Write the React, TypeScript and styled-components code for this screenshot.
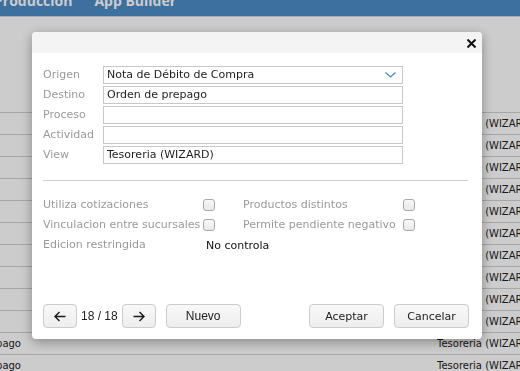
import React from 'react'
import styled, { createGlobalStyle } from 'styled-components'

const GlobalStyle = createGlobalStyle`
    html, body {
        margin: 0;
        padding: 0;
        overflow: hidden;
        background: #ffffff;
        font-family: "DejaVu Sans", Verdana, sans-serif;
    }
`

const Page = styled.div`
    width: 520px;
    height: 371px;
    overflow: hidden;
    background: #ffffff;
`

// page is scrolled a bit, so the bar sits partly above the window
const TopBar = styled.div`
    height: 30px;
    margin-top: -14px;
    display: flex;
    align-items: center;
    gap: 22px;
    margin-left: -6px;
    background: #4d8bc7;
    border-bottom: 1px solid #d3d9e0;
`

const MenuItem = styled.span`
    font-family: "Open Sans", "Liberation Sans", sans-serif;
    font-weight: 700;
    font-size: 14px;
    color: #ffffff;
    line-height: 30px;
`

const PageHead = styled.div`
    height: 95px;
`

const Row = styled.div`
    display: grid;
    grid-template-columns: 21px 416px 1fr;
    height: 21px;
    border-top: 1px solid #d0d0d0;
    align-items: center;
    font-size: 10px;
    color: #222;
`

const LeftCell = styled.div`
    display: flex;
    justify-content: flex-end;
    overflow: hidden;
    white-space: nowrap;
`

const RightCell = styled.div`
    white-space: nowrap;
    overflow: hidden;
`

const Backdrop = styled.div`
    position: fixed;
    inset: 0;
    background: rgba(0, 0, 0, 0.2);
`

const Dialog = styled.div`
    position: fixed;
    top: 32px;
    left: 32px;
    width: 450px;
    height: 307px;
    background: #ffffff;
    border-radius: 4px;
    overflow: hidden;
    box-shadow: 0 3px 12px rgba(0, 0, 0, 0.35);
    display: flex;
    flex-direction: column;
    font-size: 11px;
`

const DialogHeader = styled.div`
    height: 21px;
    background: #f4f4f4;
    display: flex;
    align-items: center;
    justify-content: flex-end;
    padding-right: 6px;
`

const CloseButton = styled.button`
    border: 0;
    padding: 0;
    background: none;
    width: 9px;
    height: 9px;
    display: flex;
    margin-top: 1px;
`

const Body = styled.div`
    flex: 1;
    display: flex;
    flex-direction: column;
    padding: 13px 13px 11px 11px;
`

const FormGrid = styled.div`
    display: grid;
    grid-template-columns: 60px 300px;
    grid-auto-rows: 18px;
    row-gap: 2px;
`

const Label = styled.div`
    color: #9a9a9a;
    line-height: 18px;
    white-space: nowrap;
`

const Field = styled.div`
    box-sizing: border-box;
    height: 18px;
    border: 1px solid #c8c8c8;
    padding: 0 6px 0 3px;
    line-height: 16px;
    color: #1e1e1e;
    display: flex;
    align-items: center;
    justify-content: space-between;
`

const Separator = styled.div`
    height: 1px;
    background: #cfcfcf;
    margin: 16px 1px 0 0;
`

const CheckGrid = styled.div`
    display: grid;
    grid-template-columns: 160px 13px 27px 160px 13px;
    grid-auto-rows: 20px;
    align-items: center;
    margin-top: 14px;
`

const Box = styled.span`
    box-sizing: border-box;
    width: 12px;
    height: 12px;
    border: 1px solid #a8a8a8;
    border-radius: 3px;
    background: linear-gradient(#f8f8f8, #e9e9e9);
`

const Value = styled.div`
    grid-column: 2 / span 3;
    padding-left: 3px;
    color: #111;
    white-space: nowrap;
`

const Footer = styled.div`
    margin-top: auto;
    display: flex;
    align-items: center;
`

const Button = styled.button<{ $w: number; $arial?: boolean }>`
    box-sizing: border-box;
    width: ${({ $w }) => $w}px;
    height: 24px;
    border: 1px solid #cccccc;
    border-radius: 4px;
    background: linear-gradient(#f8f8f8, #eeeeee);
    color: #222;
    padding: 0;
    display: flex;
    align-items: center;
    justify-content: center;
    font-family: ${({ $arial }) => $arial ? '"Liberation Sans", Arial, sans-serif' : '"DejaVu Sans", Verdana, sans-serif'};
    font-size: ${({ $arial }) => $arial ? '12px' : '11px'};
`

const Counter = styled.span`
    font-family: "Liberation Sans", Arial, sans-serif;
    font-size: 12px;
    color: #222;
    margin: 0 4px;
`

const Actions = styled.div`
    margin-left: auto;
    display: flex;
    gap: 10px;
`

const Arrow = ({ left }: { left?: boolean }) => (
    <svg width="12" height="11" viewBox="0 0 12 11" fill="none" stroke="#1a1a1a" strokeWidth="1.4"
        style={{ transform: left ? 'scaleX(-1)' : undefined }}>
        <path d="M0.5 5.5H11 M6.5 1L11 5.5L6.5 10" />
    </svg>
)

const rows = Array.from({ length: 12 }, (_, i) => (i >= 10 ? 'Orden de prepago' : ''))

const App = () => {
    return (
        <>
            <GlobalStyle />
            <Page>
                <TopBar>
                    <MenuItem>Producción</MenuItem>
                    <MenuItem>App Builder</MenuItem>
                </TopBar>
                <PageHead />
                {rows.map((left, i) => (
                    <Row key={i}>
                        <LeftCell>{left}</LeftCell>
                        <div />
                        <RightCell>Tesoreria (WIZARD)</RightCell>
                    </Row>
                ))}
            </Page>
            <Backdrop />
            <Dialog>
                <DialogHeader>
                    <CloseButton>
                        <svg width="9" height="9" viewBox="0 0 9 9" stroke="#111" strokeWidth="2">
                            <path d="M0.5 0.5L8.5 8.5 M8.5 0.5L0.5 8.5" />
                        </svg>
                    </CloseButton>
                </DialogHeader>
                <Body>
                    <FormGrid>
                        <Label>Origen</Label>
                        <Field>
                            <span>Nota de Débito de Compra</span>
                            <svg width="11" height="6" viewBox="0 0 11 6" fill="none" stroke="#4a88c9" strokeWidth="1.3">
                                <path d="M0.5 0.5L5.5 5L10.5 0.5" />
                            </svg>
                        </Field>
                        <Label>Destino</Label>
                        <Field>Orden de prepago</Field>
                        <Label>Proceso</Label>
                        <Field />
                        <Label>Actividad</Label>
                        <Field />
                        <Label>View</Label>
                        <Field>Tesoreria (WIZARD)</Field>
                    </FormGrid>
                    <Separator />
                    <CheckGrid>
                        <Label>Utiliza cotizaciones</Label>
                        <Box />
                        <span />
                        <Label>Productos distintos</Label>
                        <Box />
                        <Label>Vinculacion entre sucursales</Label>
                        <Box />
                        <span />
                        <Label>Permite pendiente negativo</Label>
                        <Box />
                        <Label>Edicion restringida</Label>
                        <Value>No controla</Value>
                    </CheckGrid>
                    <Footer>
                        <Button $w={34}><Arrow left /></Button>
                        <Counter>18 / 18</Counter>
                        <Button $w={34}><Arrow /></Button>
                        <Button $w={75} $arial style={{ marginLeft: 10 }}>Nuevo</Button>
                        <Actions>
                            <Button $w={75}>Aceptar</Button>
                            <Button $w={75}>Cancelar</Button>
                        </Actions>
                    </Footer>
                </Body>
            </Dialog>
        </>
    )
}

export default App
